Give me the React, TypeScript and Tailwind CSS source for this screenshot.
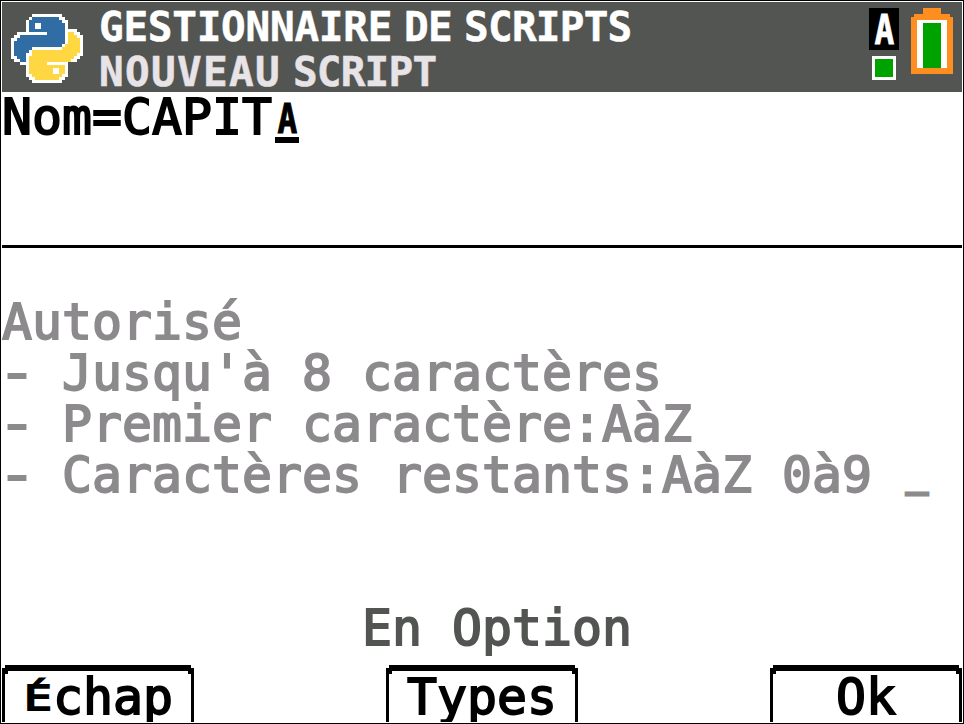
import React from "react";

type LineProps = { children: React.ReactNode; className?: string };

const bodyType =
  "font-['DejaVu_Sans_Mono',monospace] text-[49.83px] leading-[51px] whitespace-pre [-webkit-text-stroke:1.8px_currentColor]";
const titleType =
  "font-['DejaVu_Sans_Mono',monospace] font-bold text-[41px] leading-[45px] whitespace-pre";

function Line({ children, className = "" }: LineProps) {
  return <div className={`${bodyType} h-[51px] ${className}`}>{children}</div>;
}

function Dash() {
  return <span className="inline-block origin-center scale-x-130">-</span>;
}

function PythonLogo() {
  return (
    <svg className="ml-[9px] mt-3 h-[69px] w-[72px] shrink-0" viewBox="0 0 24 23" shapeRendering="crispEdges">
      <path fill="#fff" d="M7 0H17V1H18V2H19V5H22V6H23V7H24V14H23V15H22V16H19V21H18V22H17V23H7V22H6V21H5V17H3V16H1V15H0V8H1V7H2V6H5V2H6V1H7Z" />
      <path fill="#316da5" d="M7 1H16V2H17V3H18V10H17V11H7V12H6V13H5V16H3V15H2V14H1V9H2V8H3V7H12V6H6V2H7Z" />
      <path fill="#ffd742" d="M19 6H21V7H22V8H23V13H22V14H21V15H20V16H12V17H18V20H17V21H16V22H8V21H7V20H6V14H7V12H17V11H18V10H19Z" />
      <path fill="#fff" d="M8 3h2v2h-2zM14 18h2v2h-2z" />
    </svg>
  );
}

function Battery() {
  return (
    <svg className="mt-[6px] h-[66px] w-[42px]" viewBox="0 0 14 22" shapeRendering="crispEdges">
      <path fill="#ff8e21" d="M4 0H10V2H13V3H14V22H0V3H1V2H4Z" />
      <path fill="#fff" d="M2 4h10v16H2z" />
      <path fill="#00a200" d="M4 5h6v15H4z" />
    </svg>
  );
}

function SoftKey({ children }: { children: React.ReactNode }) {
  return (
    <div className="relative h-[57px] w-[192px] overflow-hidden">
      <svg className="absolute inset-0 h-[57px] w-[192px]" viewBox="0 0 64 19" shapeRendering="crispEdges">
        <path d="M1 0H63V1H64V19H63V3H62V2H2V3H1V19H0V1H1Z" />
      </svg>
      <div className={`${bodyType} relative flex h-full justify-center pt-[7px]`}>{children}</div>
    </div>
  );
}

export default function App() {
  return (
    <div className="h-[724px] w-[964px] overflow-hidden border border-black bg-white p-px text-black">
      <div className="flex h-[720px] flex-col">
        <header className="flex h-[90px] shrink-0 bg-[#525552]">
          <PythonLogo />
          <div className={`${titleType} ml-[16px] flex-1 pt-[3px] [-webkit-text-stroke:0.5px_currentColor]`}>
            <div className="flex h-[45px] gap-[12px] text-white">
              <span className="tracking-[-0.26px]">GESTIONNAIRE</span>
              <span className="tracking-[-0.68px]">DE</span>
              <span className="tracking-[-0.78px]">SCRIPTS</span>
            </div>
            <div className="flex h-[42px] gap-[12px] text-[#e7e3e7]">
              <span className="tracking-[1.3px]">NOUVEAU</span>
              <span className="tracking-[-0.78px]">SCRIPT</span>
            </div>
          </div>
          <div className="flex w-[42px] flex-col items-start pt-[6px]">
            <div className={`${titleType} flex h-[42px] w-[30px] items-center justify-center bg-black pt-[3px] text-[37px] text-white [-webkit-text-stroke:0.8px_currentColor]`}>
              <span className="inline-block scale-x-80">A</span>
            </div>
            <div className="ml-[3px] mt-[6px] h-6 w-6 border-[3px] border-white bg-[#00a200]" />
          </div>
          <div className="w-[51px]">
            <Battery />
          </div>
        </header>
        <section className="flex h-[153px] shrink-0">
          <Line>Nom=CAPIT</Line>
          <div className="flex w-[30px] flex-col items-center">
            <div className={`${titleType} h-[45px] scale-x-80 pt-[5px] [-webkit-text-stroke:1px_currentColor]`}>A</div>
            <div className="h-[6px] w-6 bg-black" />
          </div>
        </section>
        <div className="h-[3px] shrink-0 bg-black" />
        <section className="h-[355px] shrink-0 pt-[49px] text-[#8c8a8c]">
          <Line>Autorisé</Line>
          <Line><Dash /> Jusqu'à 8 caractères</Line>
          <Line><Dash /> Premier caractère:AàZ</Line>
          <Line>
            <Dash /> Caractères restants:AàZ 0à9 <span className="inline-block -translate-y-[9px] scale-x-75 [-webkit-text-stroke:3px_currentColor]">_</span>
          </Line>
        </section>
        <Line className="shrink-0 pl-[360px] text-[#525552]">En Option</Line>
        <nav className="mt-auto flex shrink-0 justify-between">
          <SoftKey>
            <span className="flex w-[30px] justify-center">
              <span className="inline-block scale-x-140 text-[33px] translate-y-[1px]">É</span>
            </span>
            <span>chap</span>
          </SoftKey>
          <SoftKey>Types</SoftKey>
          <SoftKey>Ok</SoftKey>
        </nav>
      </div>
    </div>
  );
}
